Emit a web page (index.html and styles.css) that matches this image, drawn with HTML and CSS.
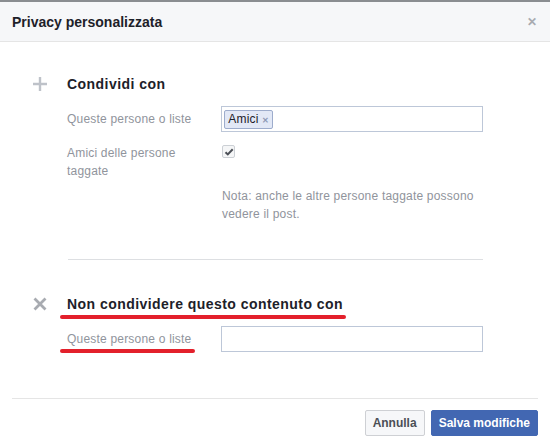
FILE: index.html
```html
<!DOCTYPE html>
<html lang="it">
<head>
    <meta charset="UTF-8">
    <title>Privacy personalizzata</title>
    <link rel="stylesheet" href="styles.css">
</head>
<body>

<div class="dialog">
    <div class="dialog-head">
        <h3>Privacy personalizzata</h3>
        <span class="close">&#x2715;</span>
    </div>

    <div class="dialog-body">
        <div class="section">
            <div class="section-title">
                <svg class="icon" width="14" height="14" viewBox="0 0 14 14">
                    <path d="M7 0v14M0 7h14" stroke="#bec2c9" stroke-width="2.4"/>
                </svg>
                <h4>Condividi con</h4>
            </div>
            <div class="row">
                <label>Queste persone o liste</label>
                <div class="field">
                    <span class="token">Amici <span class="token-x">&#x2715;</span></span>
                </div>
            </div>
            <div class="row">
                <label>Amici delle persone<br>taggate</label>
                <div class="check-col">
                    <span class="checkbox">
                        <svg width="10" height="8" viewBox="0 0 10 8">
                            <path d="M1.5 4.2l2.3 2.2L8.7 1.3" fill="none" stroke="#4b4f56" stroke-width="2"/>
                        </svg>
                    </span>
                    <p class="note">Nota: anche le altre persone taggate possono<br>vedere il post.</p>
                </div>
            </div>
        </div>

        <hr class="sep">

        <div class="section">
            <div class="section-title">
                <svg class="icon" width="14" height="14" viewBox="0 0 14 14">
                    <path d="M1.5 1.5l11 11M12.5 1.5l-11 11" stroke="#a8abb1" stroke-width="2.8"/>
                </svg>
                <h4><span class="marked long">Non condividere questo contenuto con</span></h4>
            </div>
            <div class="row">
                <label><span class="marked short">Queste persone o liste</span></label>
                <div class="field"></div>
            </div>
        </div>
    </div>

    <div class="dialog-foot">
        <button class="btn">Annulla</button>
        <button class="btn primary">Salva modifiche</button>
    </div>
</div>

</body>
</html>
```

FILE: styles.css
```css
body {
    margin: 0;
    font-family: "Liberation Sans", Arial, sans-serif;
    background-color: #fff;
    color: #1d2129;
}

.dialog {
    width: 550px;
    height: 447px;
    border-top: 2px solid #8a8d91;
    box-sizing: border-box;
    background-color: #fff;
}

.dialog-head {
    display: flex;
    justify-content: space-between;
    align-items: center;
    height: 39px;
    padding: 0 13px 0 12px;
    background-color: #f6f7f9;
    border-bottom: 1px solid #e5e5e5;
}

.dialog-head h3 {
    margin: 0;
    font-size: 14px;
    font-weight: bold;
    color: #1d2129;
}

.close {
    color: #a8abb1;
    font-size: 12px;
    font-weight: bold;
}

.dialog-body {
    padding: 34px 67px 0 33px;
    height: 322px;
}

.section-title {
    display: flex;
    align-items: center;
    gap: 20px;
    height: 16px;
}

.section-title h4 {
    margin: 0;
    font-size: 14px;
    font-weight: bold;
    letter-spacing: 0.45px;
    color: #1d2129;
}

.row {
    display: flex;
    margin-left: 34px;
}

.row label {
    width: 155px;
    font-size: 12px;
    line-height: 18px;
    letter-spacing: 0.2px;
    color: #90949c;
}

.section .row:nth-child(2) {
    margin-top: 14px;
    align-items: center;
}

.section .row:nth-child(3) {
    margin-top: 12px;
}

.field {
    width: 259px;
    height: 24px;
    border: 1px solid #bdc7d8;
    display: flex;
    align-items: center;
    padding-left: 2px;
}

.token {
    display: inline-block;
    height: 17px;
    line-height: 17px;
    padding: 0 3px;
    background-color: #e2e8f6;
    border: 1px solid #9daccc;
    border-radius: 2px;
    font-size: 12px;
    letter-spacing: 0.2px;
    color: #1d2129;
}

.token-x {
    color: #8d99b5;
    font-size: 8px;
    font-weight: bold;
}

.check-col {
    padding-top: 1px;
}

.checkbox {
    display: flex;
    align-items: center;
    justify-content: center;
    width: 11px;
    height: 11px;
    border: 1px solid #ccd0d5;
    border-radius: 2px;
    background-color: #f5f6f7;
}

.note {
    margin: 29px 0 0;
    font-size: 12px;
    line-height: 18px;
    letter-spacing: 0.2px;
    color: #90949c;
}

.sep {
    margin: 36px 0 36px 35px;
    border: none;
    border-top: 1px solid #dddfe2;
}

.sep + .section .row {
    margin-top: 14px;
    align-items: center;
}

.marked {
    position: relative;
}

.marked::after {
    content: "";
    position: absolute;
    left: -7px;
    height: 4px;
    border-radius: 2px;
    background-color: #e3202b;
}

.marked.long::after {
    right: -3px;
    bottom: -7px;
}

.marked.short::after {
    right: -4px;
    bottom: -7px;
}

.dialog-foot {
    margin: 0 12px;
    border-top: 1px solid #e5e5e5;
    padding-top: 11px;
    display: flex;
    justify-content: flex-end;
    gap: 6px;
}

.btn {
    height: 26px;
    padding: 0 7px;
    font-family: "Liberation Sans", Arial, sans-serif;
    font-size: 12px;
    font-weight: bold;
    color: #4b4f56;
    background-color: #f6f7f9;
    border: 1px solid #ced0d4;
    border-radius: 2px;
}

.btn.primary {
    color: #fff;
    background-color: #4267b2;
    border-color: #4267b2;
}
```
